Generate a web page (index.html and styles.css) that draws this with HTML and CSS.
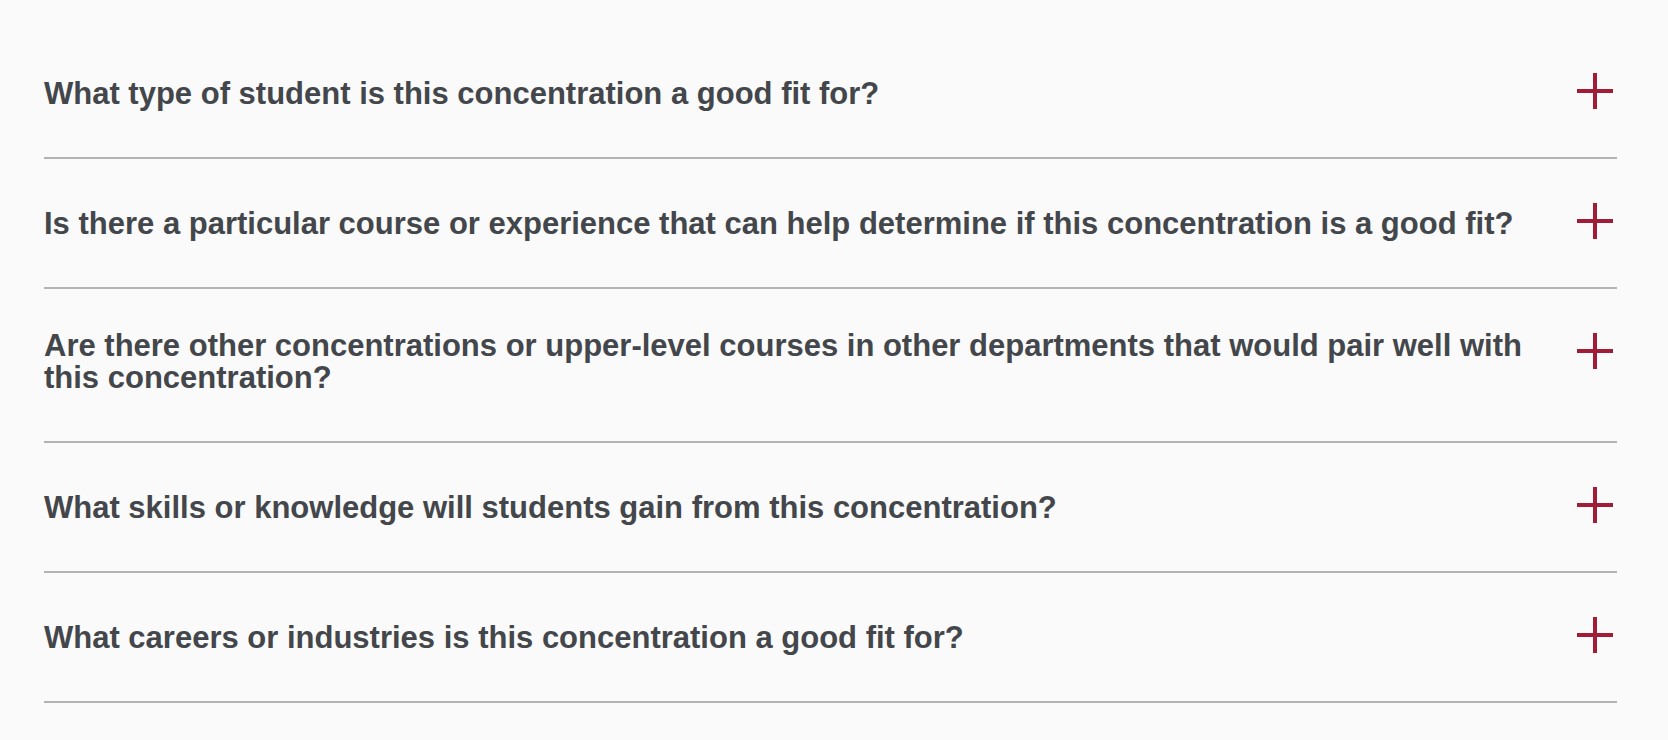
FILE: index.html
```html
<!DOCTYPE html>
<html lang="en">
<head>
<meta charset="utf-8">
<title>FAQ</title>
<link rel="stylesheet" href="styles.css">
</head>
<body>
<section class="faq">
  <div class="faq-item">
    <h3 class="faq-question">What type of student is this concentration a good fit for?</h3>
    <span class="faq-toggle"><svg viewBox="0 0 36 36" width="36" height="36"><path d="M0 18H36M18 0V36"/></svg></span>
  </div>
  <div class="faq-item">
    <h3 class="faq-question">Is there a particular course or experience that can help determine if this concentration is a good fit?</h3>
    <span class="faq-toggle"><svg viewBox="0 0 36 36" width="36" height="36"><path d="M0 18H36M18 0V36"/></svg></span>
  </div>
  <div class="faq-item">
    <h3 class="faq-question">Are there other concentrations or upper-level courses in other departments that would pair well with this concentration?</h3>
    <span class="faq-toggle"><svg viewBox="0 0 36 36" width="36" height="36"><path d="M0 18H36M18 0V36"/></svg></span>
  </div>
  <div class="faq-item">
    <h3 class="faq-question">What skills or knowledge will students gain from this concentration?</h3>
    <span class="faq-toggle"><svg viewBox="0 0 36 36" width="36" height="36"><path d="M0 18H36M18 0V36"/></svg></span>
  </div>
  <div class="faq-item">
    <h3 class="faq-question">What careers or industries is this concentration a good fit for?</h3>
    <span class="faq-toggle"><svg viewBox="0 0 36 36" width="36" height="36"><path d="M0 18H36M18 0V36"/></svg></span>
  </div>
</section>
</body>
</html>
```
FILE: styles.css
```css
html, body {
  margin: 0;
  padding: 0;
  background: #fafafa;
}
body {
  font-family: "Liberation Sans", Arial, Helvetica, sans-serif;
}
.faq {
  width: 1573px;
  margin-left: 44px;
  padding-top: 29px;
}
.faq-item {
  display: flex;
  align-items: flex-end;
  justify-content: space-between;
  gap: 32px;
  padding: 41px 4px 47px 0;
  border-bottom: 2px solid #b3b3b3;
}
.faq-question {
  margin: 0;
  font-size: 31px;
  line-height: 32.2px;
  font-weight: 700;
  color: #43464a;
  flex: 1 1 auto;
}
.faq-toggle {
  align-self: flex-start;
  flex: 0 0 36px;
  box-sizing: border-box;
  height: 40px;
  padding-top: 3px;
  display: block;
}
.faq-toggle svg {
  display: block;
}
.faq-toggle path {
  stroke: #a01c37;
  stroke-width: 4;
  fill: none;
}
```
